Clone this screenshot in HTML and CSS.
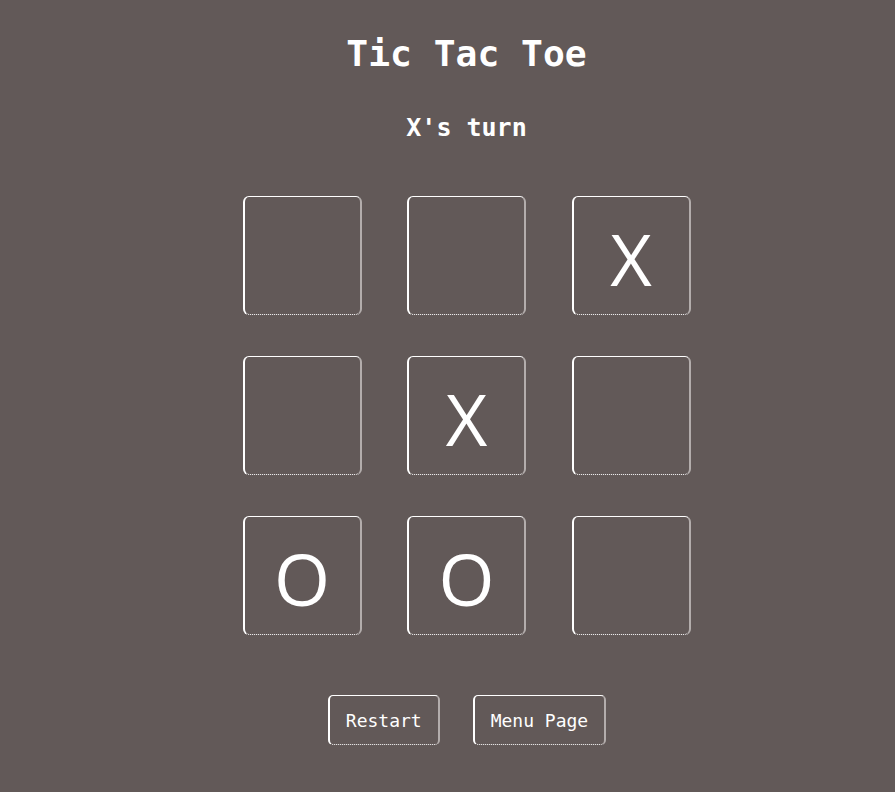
FILE: index.html
```html
<!DOCTYPE html>
<html lang="en">
<head>
<meta charset="utf-8">
<title>Tic Tac Toe</title>
<link rel="stylesheet" href="styles.css">
</head>
<body>
<main class="page">
  <h1 class="title">Tic Tac Toe</h1>
  <p class="status">X's turn</p>
  <div class="board">
    <button class="cell"></button>
    <button class="cell"></button>
    <button class="cell">X</button>
    <button class="cell"></button>
    <button class="cell">X</button>
    <button class="cell"></button>
    <button class="cell">O</button>
    <button class="cell">O</button>
    <button class="cell"></button>
  </div>
  <div class="actions">
    <button class="btn">Restart</button>
    <button class="btn">Menu Page</button>
  </div>
</main>
</body>
</html>
```
FILE: styles.css
```css
html, body {
  margin: 0;
  padding: 0;
  background: #625958;
  height: 100%;
}
body {
  color: #ffffff;
  font-family: "DejaVu Sans Mono", "Liberation Mono", monospace;
}
.page {
  display: flex;
  flex-direction: column;
  align-items: center;
  padding-left: 38px;
}
.title {
  margin: 33px 0 0;
  font-size: 36.3px;
  line-height: 42px;
  font-weight: bold;
}
.status {
  margin: 38px 0 0;
  font-size: 25px;
  line-height: 30px;
  font-weight: bold;
}
.board {
  margin-top: 53px;
  display: grid;
  grid-template-columns: repeat(3, 119px);
  grid-auto-rows: 119px;
  column-gap: 45.5px;
  row-gap: 41px;
}
.cell,
.btn {
  box-sizing: border-box;
  margin: 0;
  background: transparent;
  color: #ffffff;
  border-style: solid solid dotted solid;
  border-width: 1px 2px 1px 2px;
  border-color: #ffffff #b3adac #ffffff #ffffff;
}
.cell {
  width: 119px;
  height: 119px;
  padding: 4px 0 0;
  border-radius: 6px;
  font-family: "Open Sans", "DejaVu Sans", sans-serif;
  font-size: 72px;
  line-height: 1;
}
.actions {
  margin-top: 60px;
  display: flex;
  gap: 33px;
  padding-left: 1px;
}
.btn {
  height: 50px;
  padding: 0 16px;
  border-radius: 5px;
  font-family: "DejaVu Sans Mono", "Liberation Mono", monospace;
  font-size: 18px;
}
```
